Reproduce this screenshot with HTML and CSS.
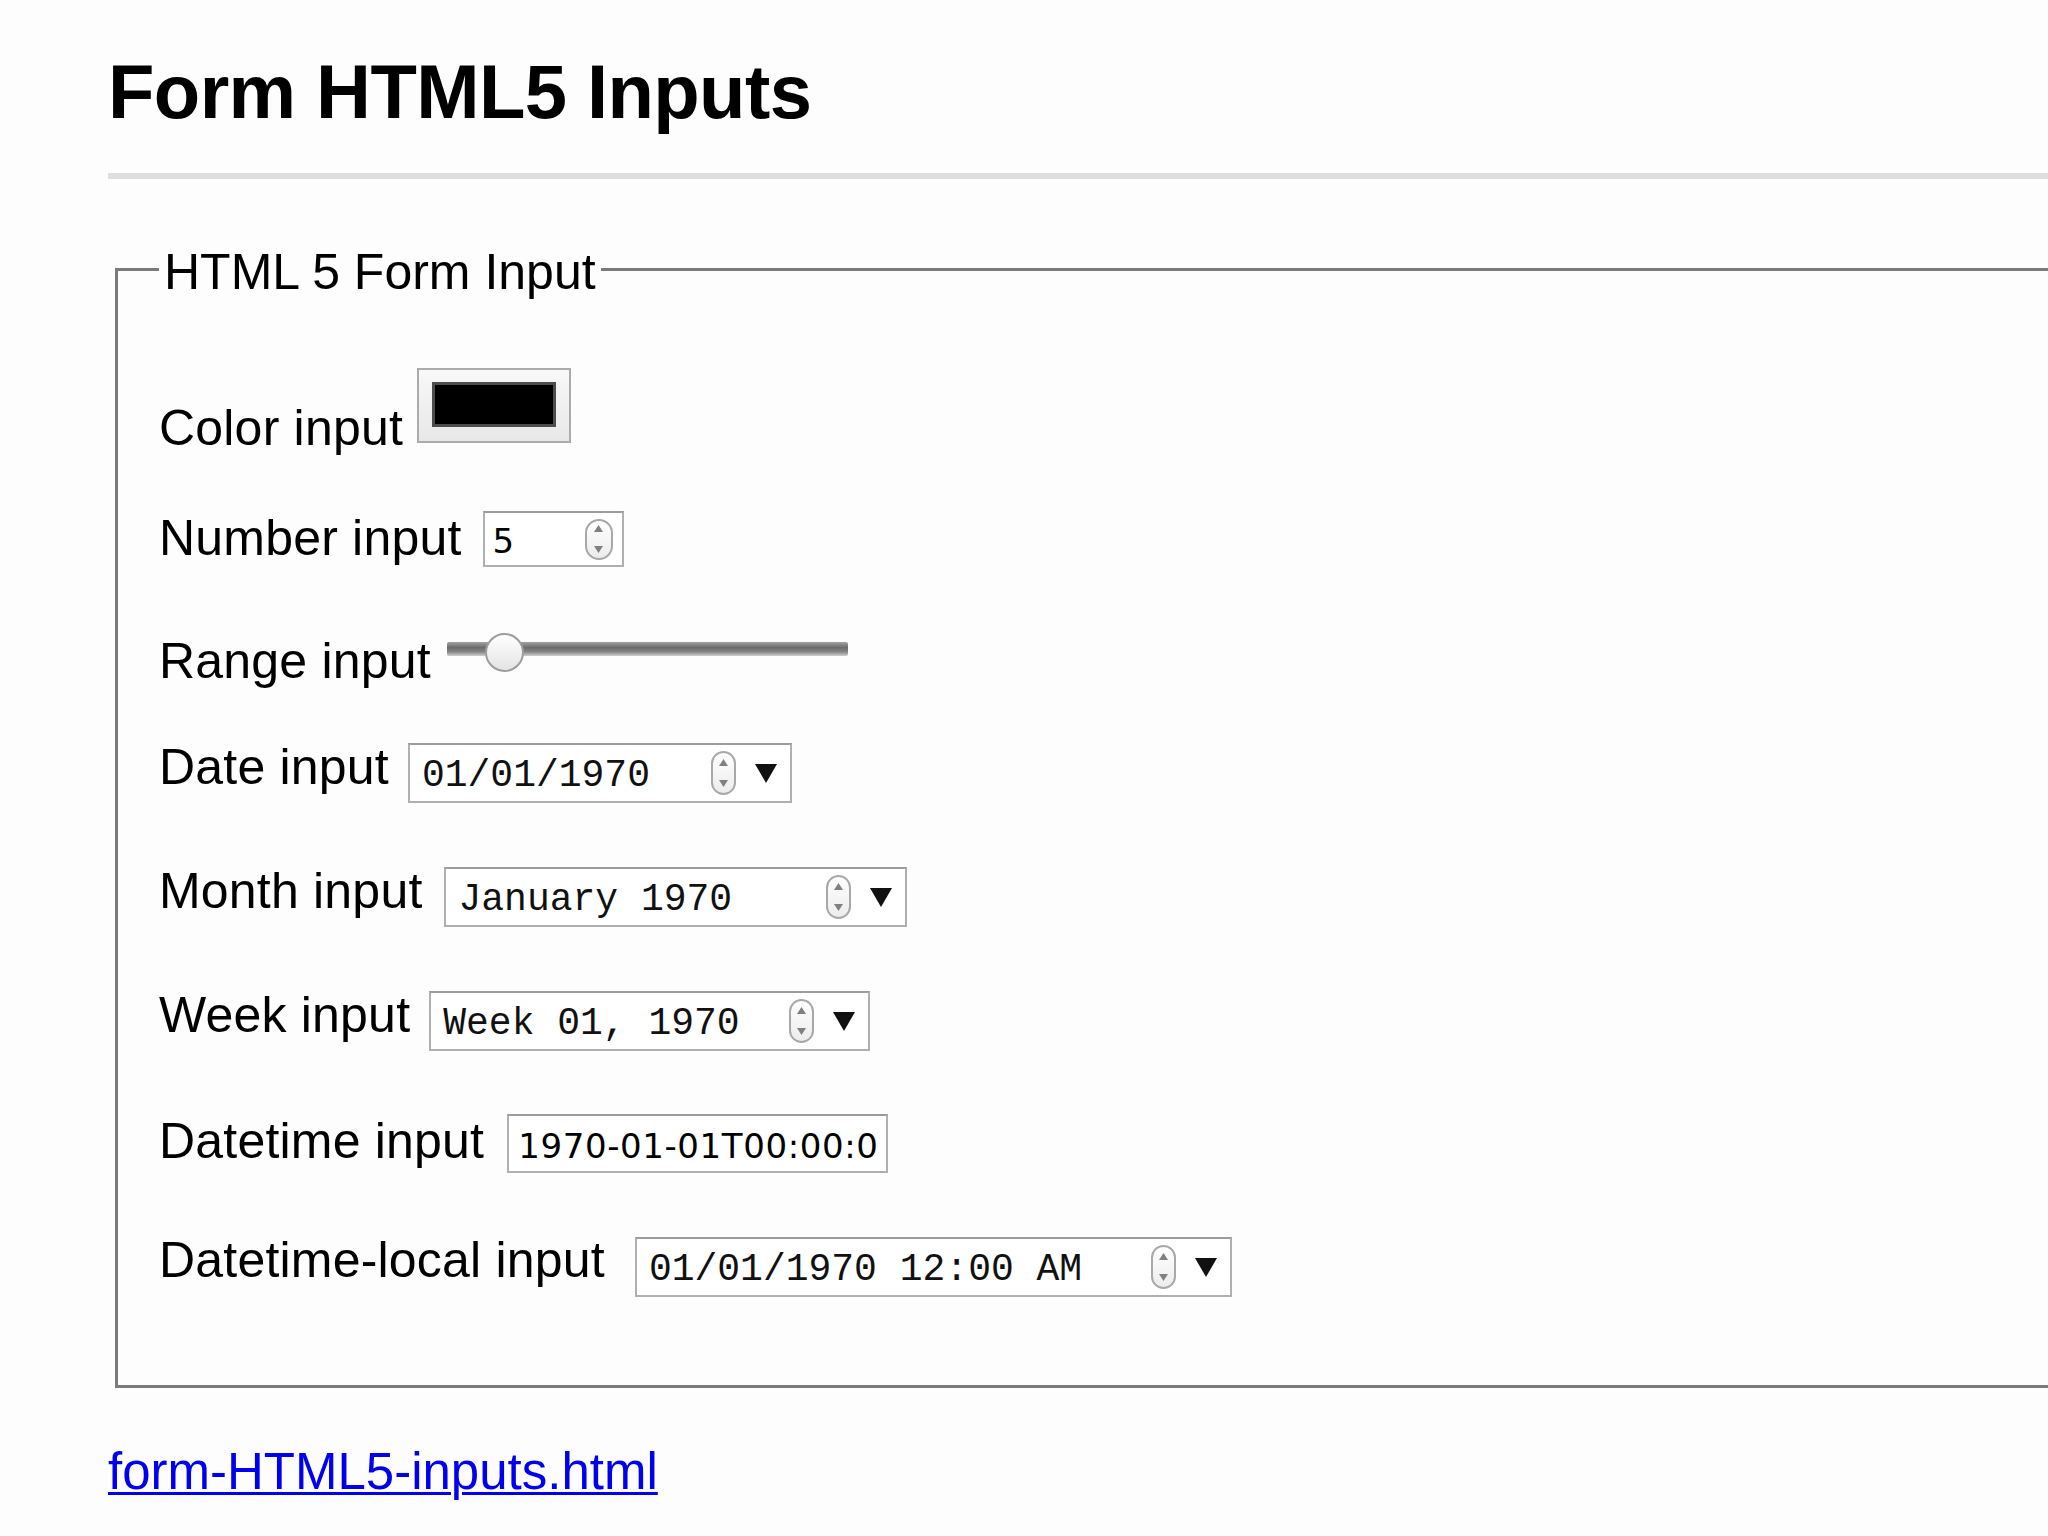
FILE: index.html
```html
<!DOCTYPE html>
<html lang="en">
<head>
<meta charset="utf-8">
<title>Form HTML5 Inputs</title>
<link rel="stylesheet" href="styles.css">
</head>
<body>
<h1 class="title">Form HTML5 Inputs</h1>
<hr class="rule">
<form class="form">
  <fieldset class="group">
    <legend class="group-title">HTML 5 Form Input</legend>

    <div class="row row-color">
      <span class="label">Color input</span>
      <span class="color-well" role="button" aria-label="Color input"><span class="color-swatch"></span></span>
    </div>

    <div class="row row-number">
      <span class="label">Number input</span>
      <span class="field field-number">
        <span class="field-text">5</span>
        <span class="spin spin-number"><svg width="9" height="28" viewBox="0 0 9 28"><path d="M4.5 0L9 7H0Z" fill="#808080"/><path d="M0 21H9L4.5 28Z" fill="#808080"/></svg></span>
      </span>
    </div>

    <div class="row row-range">
      <span class="label">Range input</span>
      <span class="range" role="slider" aria-valuenow="10" aria-valuemin="0" aria-valuemax="100">
        <span class="range-track"></span>
        <span class="range-thumb"></span>
      </span>
    </div>

    <div class="row row-date">
      <span class="label">Date input</span>
      <span class="field field-mono w-date">
        <span class="field-text">01/01/1970</span>
        <span class="spin"><svg width="9" height="28" viewBox="0 0 9 28"><path d="M4.5 0L9 7H0Z" fill="#808080"/><path d="M0 21H9L4.5 28Z" fill="#808080"/></svg></span>
        <svg class="caret" width="22" height="19" viewBox="0 0 22 19"><path d="M0 0H22L11 19Z" fill="#111"/></svg>
      </span>
    </div>

    <div class="row row-month">
      <span class="label">Month input</span>
      <span class="field field-mono w-month">
        <span class="field-text">January 1970</span>
        <span class="spin"><svg width="9" height="28" viewBox="0 0 9 28"><path d="M4.5 0L9 7H0Z" fill="#808080"/><path d="M0 21H9L4.5 28Z" fill="#808080"/></svg></span>
        <svg class="caret" width="22" height="19" viewBox="0 0 22 19"><path d="M0 0H22L11 19Z" fill="#111"/></svg>
      </span>
    </div>

    <div class="row row-week">
      <span class="label">Week input</span>
      <span class="field field-mono w-week">
        <span class="field-text">Week 01, 1970</span>
        <span class="spin"><svg width="9" height="28" viewBox="0 0 9 28"><path d="M4.5 0L9 7H0Z" fill="#808080"/><path d="M0 21H9L4.5 28Z" fill="#808080"/></svg></span>
        <svg class="caret" width="22" height="19" viewBox="0 0 22 19"><path d="M0 0H22L11 19Z" fill="#111"/></svg>
      </span>
    </div>

    <div class="row row-datetime">
      <span class="label">Datetime input</span>
      <span class="field field-datetime">
        <span class="field-text">1970-01-01T00:00:0</span>
      </span>
    </div>

    <div class="row row-local">
      <span class="label">Datetime-local input</span>
      <span class="field field-mono w-local">
        <span class="field-text">01/01/1970 12:00 AM</span>
        <span class="spin"><svg width="9" height="28" viewBox="0 0 9 28"><path d="M4.5 0L9 7H0Z" fill="#808080"/><path d="M0 21H9L4.5 28Z" fill="#808080"/></svg></span>
        <svg class="caret" width="22" height="19" viewBox="0 0 22 19"><path d="M0 0H22L11 19Z" fill="#111"/></svg>
      </span>
    </div>
  </fieldset>
</form>
<p class="source"><a class="source-link" href="form-HTML5-inputs.html">form-HTML5-inputs.html</a></p>
</body>
</html>
```
FILE: styles.css
```css
html {
  overflow: hidden;
  background: #fdfdfd;
}

body {
  margin: 0 0 0 108px;
  font-family: "Liberation Sans", Arial, Helvetica, sans-serif;
  color: #000;
  background: #fdfdfd;
}

.title {
  margin: 54px 0 0;
  font-size: 76px;
  line-height: 76px;
  font-weight: bold;
  letter-spacing: -0.6px;
}

.rule {
  margin: 43px 0 0;
  height: 6px;
  border: 0;
  background: #dedede;
}

.form {
  margin: 0;
}

.group {
  margin: 58px -60px 0 7px;
  padding: 67px 0 88px 41px;
  border: 3px solid #7a7a7a;
  min-width: 0;
}

.group-title {
  padding: 6px 5px 0;
  font-size: 50px;
  line-height: 58px;
}

.row {
  display: flex;
  align-items: flex-start;
}

.label {
  flex: none;
  font-size: 50px;
  line-height: 58px;
  white-space: nowrap;
  letter-spacing: 0.2px;
}

/* vertical rhythm of the rows */
.row-color .label { margin-top: 31px; }
.row-number { margin-top: 52px; }
.row-range { margin-top: 65px; }
.row-date { margin-top: 48px; }
.row-month { margin-top: 59px; }
.row-week { margin-top: 59px; }
.row-datetime { margin-top: 61px; }
.row-local { margin-top: 58px; }

/* color input */
.color-well {
  flex: none;
  box-sizing: border-box;
  width: 154px;
  height: 75px;
  margin-left: 14px;
  padding: 12px 13px 14px;
  border: 2px solid #ababab;
  background: linear-gradient(#f8f8f8, #e8e8e8);
}

.color-swatch {
  display: block;
  box-sizing: border-box;
  width: 100%;
  height: 100%;
  border: 3px solid #4d4d4d;
  background: #000;
}

/* generic text-ish fields */
.field {
  flex: none;
  box-sizing: border-box;
  display: flex;
  align-items: center;
  border: 2px solid #b0b0b0;
  border-top-color: #9c9c9c;
  background: #fff;
  overflow: hidden;
}

.field-text {
  flex: 1;
  white-space: nowrap;
  padding-top: 4px;
}

.spin {
  flex: none;
  box-sizing: border-box;
  width: 25px;
  height: 44px;
  display: flex;
  align-items: center;
  justify-content: center;
  border: 2px solid #a8a8a8;
  border-radius: 13px;
  background: linear-gradient(#ffffff, #ececec);
}

.spin svg {
  display: block;
}

.caret {
  flex: none;
  display: block;
  margin-left: 19px;
}

/* number */
.field-number {
  width: 141px;
  height: 56px;
  margin-top: 2px;
  margin-left: 21px;
  padding: 0 9px 0 8px;
  font-family: "DejaVu Sans", "Liberation Sans", sans-serif;
  font-size: 34px;
}

.field-number .field-text {
  line-height: 40px;
}

.spin-number {
  width: 28px;
  height: 41px;
  border-radius: 14px;
}

/* monospace date-like fields */
.field-mono {
  height: 60px;
  margin-top: 5px;
  padding: 0 13px 0 12px;
  font-family: "Liberation Mono", "Courier New", monospace;
  font-size: 38px;
  color: #111;
}

.field-mono .field-text {
  line-height: 43px;
}

.w-date { width: 384px; margin-left: 19px; }
.w-month { width: 463px; margin-left: 22px; }
.w-week { width: 441px; margin-left: 19px; }
.w-local { width: 597px; margin-left: 30px; margin-top: 6px; }

/* datetime */
.field-datetime {
  width: 381px;
  height: 59px;
  margin-top: 2px;
  margin-left: 23px;
  padding: 0 0 0 9px;
  font-family: "DejaVu Sans", "Liberation Sans", sans-serif;
  font-size: 34px;
  letter-spacing: 0.6px;
}

.field-datetime .field-text {
  line-height: 40px;
  padding-top: 5px;
}

/* range */
.range {
  flex: none;
  position: relative;
  display: block;
  width: 401px;
  height: 40px;
  margin-top: 1px;
  margin-left: 16px;
}

.range-track {
  display: block;
  height: 14px;
  margin-top: 9px;
  border-radius: 2px;
  background: linear-gradient(#a2a2a2, #6c6c6c 40%, #858585 70%, #cfcfcf);
}

.range-thumb {
  position: absolute;
  left: 38px;
  top: 0;
  box-sizing: border-box;
  width: 39px;
  height: 39px;
  border-radius: 50%;
  border: 2px solid #9d9d9d;
  background: linear-gradient(#ffffff, #e4e4e4);
}

/* source link */
.source {
  margin: 55px 0 0;
  font-size: 51px;
  line-height: 58px;
}

.source-link {
  color: #0000ee;
  text-decoration: underline;
  text-decoration-thickness: 3px;
  text-underline-offset: 3px;
}
```
